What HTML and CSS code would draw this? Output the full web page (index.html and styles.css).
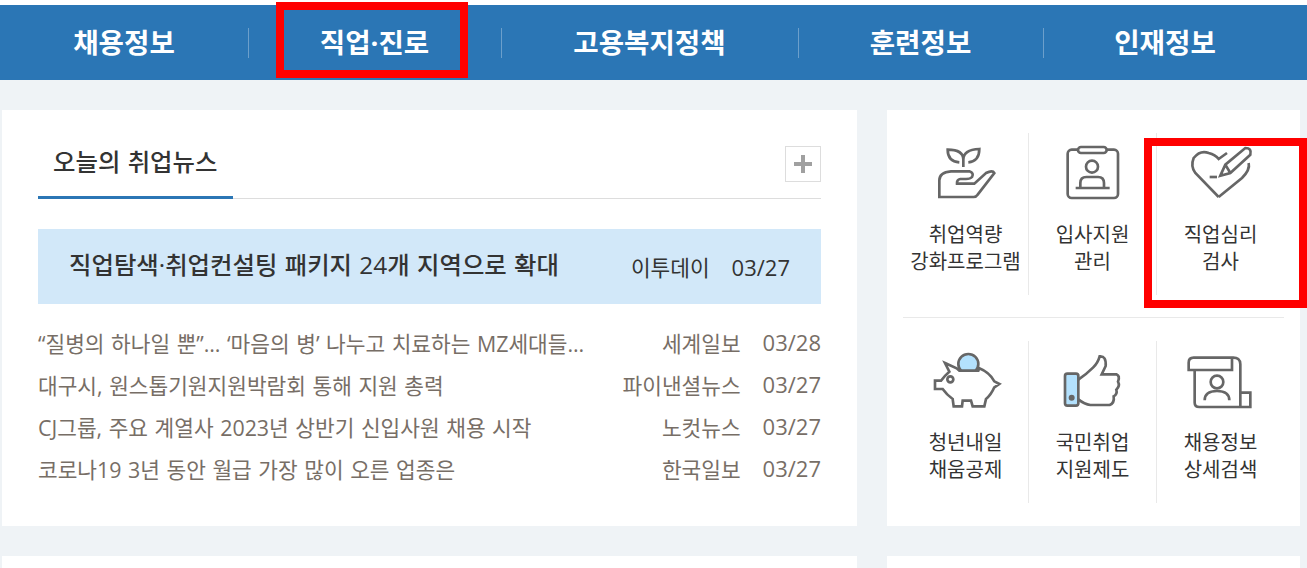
FILE: index.html
```html
<!DOCTYPE html>
<html lang="ko">
<head>
    <meta charset="UTF-8">
    <title>고용정보</title>
    <link rel="stylesheet" href="styles.css">
</head>
<body>

    <!-- 상단 메뉴 -->
    <nav class="gnb">
        <a class="gnb-item">채용정보</a>
        <a class="gnb-item">직업·진로<span class="mark mark-gnb"></span></a>
        <a class="gnb-item">고용복지정책</a>
        <a class="gnb-item">훈련정보</a>
        <a class="gnb-item">인재정보</a>
    </nav>

    <div class="main-row">
        <!-- 오늘의 취업뉴스 -->
        <section class="card news">
            <div class="news-head">
                <h2>오늘의 취업뉴스</h2>
                <a class="more-btn">
                    <svg width="18" height="18" viewBox="0 0 18 18"><path d="M9 0V18M0 9H18" stroke="#a0a0a0" stroke-width="4"/></svg>
                </a>
            </div>
            <div class="news-top">
                <strong>직업탐색·취업컨설팅 패키지 24개 지역으로 확대</strong>
                <span class="src">이투데이</span>
                <span class="date">03/27</span>
            </div>
            <ul class="news-list">
                <li><a>“질병의 하나일 뿐”… ‘마음의 병’ 나누고 치료하는 MZ세대들…</a><span class="src">세계일보</span><span class="date">03/28</span></li>
                <li><a>대구시, 원스톱기원지원박람회 통해 지원 총력</a><span class="src">파이낸셜뉴스</span><span class="date">03/27</span></li>
                <li><a>CJ그룹, 주요 계열사 2023년 상반기 신입사원 채용 시작</a><span class="src">노컷뉴스</span><span class="date">03/27</span></li>
                <li><a>코로나19 3년 동안 월급 가장 많이 오른 업종은</a><span class="src">한국일보</span><span class="date">03/27</span></li>
            </ul>
        </section>

        <!-- 바로가기 -->
        <section class="card quick">
            <div class="quick-row">
                <a class="quick-item">
                    <svg class="ico" viewBox="117 70 216 180">
                        <path d="M145 230V182Q145 158 180 155H235Q250 160 243 172Q238 178 225 178H208Q197 180 198 192H250L285 160Q305 150 310 160L260 225Q255 232 248 232H145Z"/>
                        <path d="M217 142V120Q217 90 170 90Q170 125 205 128M217 120Q217 90 265 88Q265 125 232 128"/>
                    </svg>
                    <span>취업역량<br>강화프로그램</span>
                </a>
                <a class="quick-item">
                    <svg class="ico" viewBox="502 70 216 180">
                        <rect x="534" y="90" width="151" height="145" rx="12"/>
                        <rect x="565" y="82" width="86" height="18" rx="9" fill="#fff"/>
                        <circle cx="607" cy="141" r="18"/>
                        <path d="M572 205V190Q572 172 590 172H625Q643 172 643 190V205M558 205H660"/>
                    </svg>
                    <span>입사지원<br>관리</span>
                </a>
                <a class="quick-item">
                    <svg class="ico" viewBox="889 70 216 180">
                        <path d="M990 232L920 160Q905 140 915 115Q935 90 960 100Q980 105 990 118L1015 100M1080 130Q1085 150 1060 175L990 232"/>
                        <path d="M995 168L1010 135L1070 85Q1090 85 1085 105L1025 160ZM1010 135L1025 160"/>
                        <path d="M963 172H985"/>
                    </svg>
                    <span>직업심리<br>검사</span>
                </a>
            </div>
            <div class="quick-line"></div>
            <div class="quick-row">
                <a class="quick-item">
                    <svg class="ico" viewBox="117 60 216 180">
                        <circle class="blue" cx="232" cy="99" r="30"/>
                        <path fill="#fff" d="M162 96L197 112L205 119H262L265 112Q295 124 310 151L325 159L310 169Q300 192 285 204L280 226H245L240 209H215L213 226H188L185 204Q168 192 155 174H132V149H150Q160 135 175 122Z"/>
                        <circle cx="178" cy="145" r="9"/>
                    </svg>
                    <span>청년내일<br>채움공제</span>
                </a>
                <a class="quick-item">
                    <svg class="ico" viewBox="502 60 216 180">
                        <rect class="blue" x="526" y="128" width="40" height="96" rx="7"/>
                        <circle cx="546" cy="200" r="5" fill="#666"/>
                        <path d="M566 146Q590 130 610 110Q625 95 630 76Q650 74 648 105L636 130H680Q692 135 685 152Q692 165 680 176Q684 190 672 196Q675 216 660 222H602Q585 220 566 205"/>
                    </svg>
                    <span>국민취업<br>지원제도</span>
                </a>
                <a class="quick-item">
                    <svg class="ico" viewBox="889 60 216 180">
                        <path d="M1030 80H915Q900 80 900 95V117H1030V80Q1055 78 1055 100V228M918 117V215Q918 228 932 228H1085V185H1055"/>
                        <circle cx="985" cy="153" r="19"/>
                        <path d="M948 208Q948 180 985 180Q1022 180 1022 208"/>
                    </svg>
                    <span>채용정보<br>상세검색</span>
                </a>
            </div>
            <span class="mark mark-quick"></span>
        </section>
    </div>

    <div class="main-row next-row">
        <section class="card news"></section>
        <section class="card quick"></section>
    </div>

</body>
</html>
```

FILE: styles.css
```css
body {
    margin: 0;
    padding-top: 5px;
    background-color: #eff3f6;
    background-image: linear-gradient(#fff, #fff);
    background-size: 100% 5px;
    background-repeat: no-repeat;
    font-family: "Open Sans", "Noto Sans CJK KR", sans-serif;
    word-spacing: 1px;
    color: #333;
}

a {
    color: inherit;
    text-decoration: none;
}

/* 상단 메뉴 */
.gnb {
    display: grid;
    grid-template-columns: 248px 253px 297px 245px 244px;
    height: 75px;
    background-color: #2b76b5;
}

.gnb-item {
    position: relative;
    display: flex;
    justify-content: center;
    align-items: center;
    padding-bottom: 4px;
    color: #fff;
    font-size: 27.6px;
    font-weight: bold;
}

.gnb-item + .gnb-item::before {
    content: "";
    position: absolute;
    left: 0;
    top: 23px;
    height: 30px;
    width: 1px;
    background-color: #6c9fcb;
}

/* 빨간 표시 상자 */
.mark {
    position: absolute;
    box-sizing: border-box;
    border: 8px solid #f00;
}

.mark-gnb {
    left: 28px;
    top: -3px;
    width: 192px;
    height: 76px;
}

.mark-quick {
    left: 257px;
    top: 28px;
    width: 163px;
    height: 170px;
}

/* 카드 */
.main-row {
    display: flex;
    gap: 30px;
    margin-top: 30px;
    padding-left: 2px;
}

.card {
    background-color: #fff;
    height: 416px;
}

.news {
    box-sizing: border-box;
    width: 855px;
    padding: 36px 36px 0;
}

.quick {
    position: relative;
    box-sizing: border-box;
    width: 413px;
    padding: 23px 16px 0;
}

.next-row .card {
    height: 12px;
    padding: 0;
}

/* 뉴스 */
.news-head {
    display: flex;
    justify-content: space-between;
    height: 52px;
    border-bottom: 1px solid #ddd;
}

.news-head h2 {
    box-sizing: border-box;
    width: 195px;
    height: 53px;
    margin: 0;
    padding: 0 15px;
    border-bottom: 3px solid #2b76b5;
    font-size: 24.4px;
    font-weight: 500;
    line-height: 32px;
}

.more-btn {
    display: flex;
    justify-content: center;
    align-items: center;
    box-sizing: border-box;
    width: 36px;
    height: 36px;
    border: 1px solid #ddd;
}

.news-top {
    display: flex;
    align-items: center;
    height: 75px;
    margin-top: 30px;
    padding: 0 31px;
    background-color: #d2e8f9;
}

.news-top strong {
    flex: 1;
    padding-bottom: 7px;
    font-size: 24.4px;
    font-weight: 500;
}

.src {
    font-size: 21.4px;
}

.date {
    margin-left: 22px;
    font-size: 22px;
}

.news-list {
    margin: 17px 0 0;
    padding: 0;
    list-style: none;
    color: #776e66;
}

.news-list li {
    display: flex;
    align-items: center;
    height: 42px;
}

.news-list a {
    flex: 1;
    font-size: 21.4px;
}

/* 바로가기 */
.quick-row {
    display: grid;
    grid-template-columns: 125px 128px 128px;
}

.quick-item {
    display: flex;
    flex-direction: column;
    align-items: center;
    height: 162px;
    padding-top: 10px;
    box-sizing: border-box;
    font-size: 20px;
    line-height: 27px;
    text-align: center;
}

.quick-item + .quick-item {
    border-left: 1px solid #e9e9e9;
}

.ico {
    width: 72px;
    height: 60px;
    margin-bottom: 18px;
    fill: none;
    stroke: #666;
    stroke-width: 8;
}

.ico .blue {
    fill: #b3e1fd;
}

.quick-line {
    height: 1px;
    margin: 22px 0 23px;
    background-color: #e9e9e9;
}
```
